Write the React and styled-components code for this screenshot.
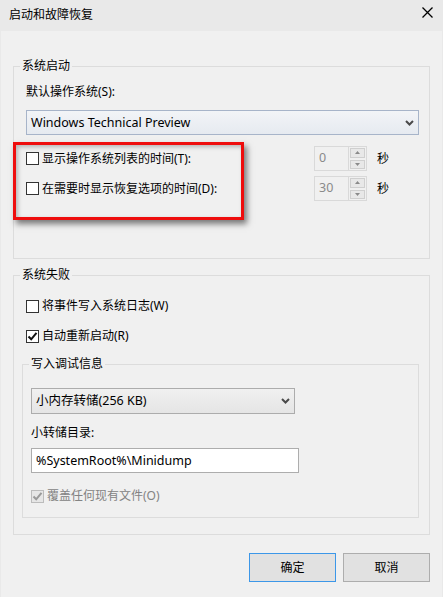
import React from "react";
import styled, { createGlobalStyle } from "styled-components";

const GlobalStyle = createGlobalStyle`
  html, body {
    margin: 0;
    padding: 0;
    background: #f0f0f0;
  }
  body {
    font-family: "Noto Sans", "Noto Sans CJK SC", sans-serif;
    font-size: 12px;
    line-height: 16px;
    color: #000;
  }
`;

const Window = styled.div`
  width: 443px;
  height: 597px;
  display: flex;
  flex-direction: column;
  background: #e9e9e9;
  overflow: hidden;
`;

const TitleBar = styled.div`
  height: 31px;
  flex-shrink: 0;
  display: flex;
  align-items: center;
  justify-content: space-between;
  padding: 0 10px 0 9px;
  background: #e9e9e9;
`;

const Title = styled.span`
  font-size: 12px;
  padding-bottom: 1px;
`;

const CloseButton = styled.div`
  width: 12px;
  height: 12px;
  display: flex;
  align-items: center;
  justify-content: center;
  margin-bottom: 7px;
`;

const Body = styled.div`
  position: relative;
  flex: 1;
  display: flex;
  flex-direction: column;
  margin: 0 1px;
  padding: 27px 12px 0 12px;
  background: #f0f0f0;
`;

const Group = styled.fieldset`
  margin: ${({ $top }) => $top || 0}px 0 0 0;
  min-width: 0;
  border: 1px solid #dcdcdc;
  padding: ${({ $pad }) => $pad};
  display: flex;
  flex-direction: column;
`;

const Legend = styled.legend`
  padding: 0 2px;
  margin-left: ${({ $shift }) => $shift}px;
  line-height: 16px;
`;

const Label = styled.div`
  margin-top: ${({ $top }) => $top || 0}px;
  height: 16px;
  color: ${({ $disabled }) => ($disabled ? "#838383" : "#000")};
`;

const Select = styled.div`
  margin-top: ${({ $top }) => $top || 0}px;
  width: ${({ $width }) => $width};
  height: ${({ $height }) => $height}px;
  box-sizing: border-box;
  display: flex;
  align-items: center;
  justify-content: space-between;
  padding: 0 4px 0 4px;
  border: 1px solid ${({ $focus }) => ($focus ? "#a7b4c9" : "#acacac")};
  background: ${({ $focus }) =>
    $focus
      ? "linear-gradient(#f2f4f7, #e6eaf0)"
      : "linear-gradient(#f0f0f0, #e5e5e5)"};
  font-size: 12.5px;
`;

const Chevron = () => (
  <svg width="9" height="6" viewBox="0 0 9 6">
    <path d="M1 1 L4.5 4.5 L8 1" fill="none" stroke="#4a4a4a" strokeWidth="2" />
  </svg>
);

const Row = styled.div`
  margin-top: ${({ $top }) => $top || 0}px;
  margin-left: ${({ $left }) => $left || 0}px;
  height: ${({ $height }) => $height || 16}px;
  display: flex;
  align-items: center;
`;

const CheckLabel = styled.label`
  flex: 1;
  display: flex;
  align-items: center;
  gap: 3px;
  color: ${({ $disabled }) => ($disabled ? "#838383" : "#000")};
`;

const Box = styled.span`
  width: 13px;
  height: 13px;
  box-sizing: border-box;
  flex-shrink: 0;
  display: flex;
  align-items: center;
  justify-content: center;
  border: 1px solid ${({ $disabled }) => ($disabled ? "#bcbcbc" : "#333")};
  background: ${({ $disabled }) => ($disabled ? "#e6e6e6" : "#fff")};
`;

const Check = ({ color }) => (
  <svg width="11" height="11" viewBox="0 0 11 11">
    <path d="M1.5 5.5 L4.2 8.3 L9.5 1.8" fill="none" stroke={color} strokeWidth="2" />
  </svg>
);

const CheckBox = ({ checked, disabled, children }) => (
  <CheckLabel $disabled={disabled}>
    <Box $disabled={disabled}>
      {checked && <Check color={disabled ? "#9a9a9a" : "#111"} />}
    </Box>
    {children}
  </CheckLabel>
);

const Spin = styled.div`
  width: 53px;
  height: 25px;
  box-sizing: border-box;
  display: flex;
  border: 1px solid #d9d9d9;
  background: #f0f0f0;
`;

const SpinValue = styled.span`
  flex: 1;
  padding: 3px 0 0 4px;
  color: #8a8a8a;
  font-size: 12.5px;
`;

const SpinButtons = styled.div`
  width: 17px;
  display: flex;
  flex-direction: column;
  border-left: 1px solid #d9d9d9;
`;

const SpinButton = styled.div`
  flex: 1;
  display: flex;
  align-items: center;
  justify-content: center;
  margin: 1px;
  border: 1px solid #cfcfcf;
  background: #e8e8e8;
`;

const Arrow = ({ up }) => (
  <svg width="5" height="3" viewBox="0 0 5 3">
    <path d={up ? "M0 3 L2.5 0 L5 3 Z" : "M0 0 L2.5 3 L5 0 Z"} fill="#8a8a8a" />
  </svg>
);

const Unit = styled.span`
  width: 52px;
  padding-left: 10px;
  box-sizing: border-box;
`;

const TimeRow = ({ label, value, top }) => (
  <Row $height={25} $top={top}>
    <CheckBox>{label}</CheckBox>
    <Spin>
      <SpinValue>{value}</SpinValue>
      <SpinButtons>
        <SpinButton>
          <Arrow up />
        </SpinButton>
        <SpinButton>
          <Arrow />
        </SpinButton>
      </SpinButtons>
    </Spin>
    <Unit>秒</Unit>
  </Row>
);

const TextInput = styled.div`
  margin-top: 7px;
  width: 268px;
  height: 25px;
  box-sizing: border-box;
  display: flex;
  align-items: center;
  padding: 0 4px;
  border: 1px solid #adadad;
  background: #fff;
  font-size: 12.5px;
`;

/* red annotation frame drawn over the first group */
const Highlight = styled.div`
  position: absolute;
  left: 12px;
  top: 111px;
  width: 231px;
  height: 78px;
  box-sizing: border-box;
  border: 3px solid #ee0d0d;
  box-shadow: 3px 4px 6px rgba(0, 0, 0, 0.5), inset 2px 2px 4px rgba(0, 0, 0, 0.25);
  pointer-events: none;
`;

const Buttons = styled.div`
  margin-top: 18px;
  display: flex;
  justify-content: flex-end;
  gap: 7px;
`;

const Button = styled.div`
  width: 87px;
  height: 29px;
  box-sizing: border-box;
  display: flex;
  align-items: center;
  justify-content: center;
  border: 1px solid ${({ $primary }) => ($primary ? "#3c97e8" : "#adadad")};
  background: #e1e1e1;
`;

export default function App() {
  return (
    <>
      <GlobalStyle />
      <Window>
        <TitleBar>
          <Title>启动和故障恢复</Title>
          <CloseButton>
            <svg width="11" height="11" viewBox="0 0 11 11">
              <path d="M0.5 0.5 L10.5 10.5 M10.5 0.5 L0.5 10.5" stroke="#000" strokeWidth="1.3" />
            </svg>
          </CloseButton>
        </TitleBar>
        <Body>
          <Group $pad="10px 10px 57px 12px">
            <Legend $shift={-6}>系统启动</Legend>
            <Label>默认操作系统(S):</Label>
            <Select $top={10} $width="100%" $height={25} $focus>
              <span>Windows Technical Preview</span>
              <Chevron />
            </Select>
            <TimeRow top={11} label="显示操作系统列表的时间(T):" value="0" />
            <TimeRow top={5} label="在需要时显示恢复选项的时间(D):" value="30" />
          </Group>

          <Group $top={8} $pad="15px 10px 16px 8px">
            <Legend $shift={-2}>系统失败</Legend>
            <Row $left={4}>
              <CheckBox>将事件写入系统日志(W)</CheckBox>
            </Row>
            <Row $left={4} $top={14}>
              <CheckBox checked>自动重新启动(R)</CheckBox>
            </Row>
            <Group $top={12} $pad="16px 10px 13px 8px">
              <Legend $shift={-2}>写入调试信息</Legend>
              <Select $width="264px" $height={26}>
                <span>小内存转储(256 KB)</span>
                <Chevron />
              </Select>
              <Label $top={11}>小转储目录:</Label>
              <TextInput>%SystemRoot%\Minidump</TextInput>
              <Row $top={15}>
                <CheckBox checked disabled>
                  覆盖任何现有文件(O)
                </CheckBox>
              </Row>
            </Group>
          </Group>

          <Buttons>
            <Button $primary>确定</Button>
            <Button>取消</Button>
          </Buttons>

          <Highlight />
        </Body>
      </Window>
    </>
  );
}
